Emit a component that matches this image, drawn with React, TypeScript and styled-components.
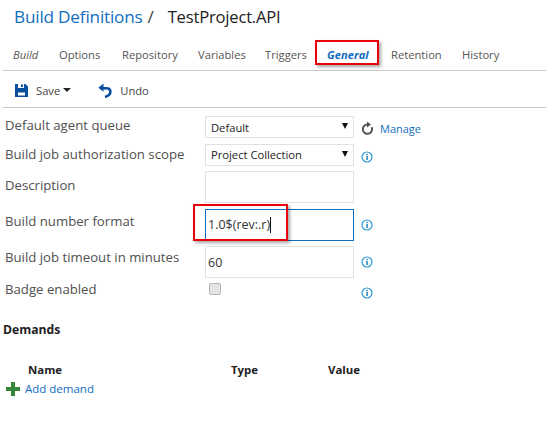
import React from "react";
import styled, { createGlobalStyle } from "styled-components";

const Global = createGlobalStyle`
  html, body { margin: 0; padding: 0; background: #fff; }
  body { font-family: "Open Sans", "Noto Sans", "Liberation Sans", sans-serif; color: #333; }
`;

const Page = styled.div`
  width: 546px;
  height: 431px;
  overflow: hidden;
  position: relative;
  background: #fff;
`;

const TitleBar = styled.div`
  height: 36px;
  padding: 0 0 3px 14px;
  display: flex;
  align-items: center;
  box-sizing: border-box;
  font-size: 17.2px;
  letter-spacing: -0.2px;
  white-space: pre;
`;
const Crumb = styled.span`color: #106ebe;`;
const Sep = styled.span`color: #444; margin: 0 14px 0 5px;`;
const Project = styled.span`color: #222; font-size: 16.6px;`;

const Tabs = styled.div`
  margin-left: 3px;
  height: 35px;
  display: flex;
  align-items: center;
  border-bottom: 1px solid #c8c8c8;
  padding: 3px 0 0 10px;
  box-sizing: border-box;
`;
const Tab = styled.div<{ $w: number; $active?: boolean; $italic?: boolean }>`
  position: relative;
  width: ${(p) => p.$w}px;
  flex: none;
  font-size: 11.2px;
  white-space: nowrap;
  color: ${(p) => (p.$active ? "#106ebe" : "#555")};
  font-style: ${(p) => (p.$italic || p.$active ? "italic" : "normal")};
  font-weight: ${(p) => (p.$active ? 700 : 400)};
`;
const TabMark = styled.div`
  position: absolute;
  left: -12px;
  top: -7px;
  width: 64px;
  height: 25px;
  box-sizing: border-box;
  border: 2px solid #e8000d;
  box-shadow: 2px 2px 3px rgba(0,0,0,0.35);
`;

const Toolbar = styled.div`
  margin-left: 3px;
  height: 37px;
  display: flex;
  align-items: center;
  border-bottom: 1px solid #c8c8c8;
  box-sizing: border-box;
  padding: 2px 0 0 12px;
  font-size: 11.2px;
  color: #444;
`;
const ToolIcon = styled.svg`flex: none; display: block;`;
const SaveLabel = styled.span`margin-left: 8px;`;
const Caret = styled.span`
  margin-left: 3px;
  width: 0;
  height: 0;
  border-left: 4px solid transparent;
  border-right: 4px solid transparent;
  border-top: 4px solid #222;
`;
const UndoBtn = styled.span`
  margin-left: 27px;
  display: flex;
  align-items: center;
  gap: 8px;
`;

const Form = styled.div`
  display: grid;
  grid-template-columns: 205px 149px 1fr;
  grid-template-rows: 22px 22px 32px 32px 32px 20px;
  padding-top: 8px;
  row-gap: 5.5px;
  font-size: 12px;
  color: #333;
`;
const Label = styled.div<{ $dy?: number }>`
  padding-left: 5px;
  font-size: 13.2px;
  color: #505050;
  line-height: 16px;
  transform: translateY(${(p) => p.$dy ?? 0}px);
  white-space: nowrap;
`;
const SelectBox = styled.div`
  position: relative;
  border: 1px solid #e2e2e2;
  box-sizing: border-box;
  display: flex;
  align-items: center;
  padding-left: 5px;
  font-size: 11.2px;
  color: #222;
`;
const SelectArrow = styled.span`
  position: absolute;
  right: 5px;
  top: 6px;
  width: 0;
  height: 0;
  border-left: 3.5px solid transparent;
  border-right: 3.5px solid transparent;
  border-top: 6px solid #111;
`;
const TextBox = styled.div<{ $focus?: boolean }>`
  position: relative;
  border: 1px solid ${(p) => (p.$focus ? "#106ebe" : "#e2e2e2")};
  box-sizing: border-box;
  display: flex;
  align-items: center;
  padding-left: 2px;
  font-size: 12.5px;
  color: #333;
`;
const Cursor = styled.span`
  display: inline-block;
  width: 1px;
  height: 16px;
  background: #111;
`;
const FieldMark = styled.div`
  position: absolute;
  left: -13px;
  top: -6px;
  width: 95px;
  height: 37px;
  box-sizing: border-box;
  border: 2px solid #e8000d;
  box-shadow: 2px 2px 3px rgba(0,0,0,0.35);
`;
const Check = styled.div`
  width: 12px;
  height: 12px;
  margin: -1px 0 0 4px;
  background: #e4e4e4;
  border: 1px solid #b4b4b4;
  border-radius: 2px;
  box-sizing: border-box;
`;
const Side = styled.div<{ $dy?: number }>`
  display: flex;
  align-items: center;
  padding-left: 7px;
  gap: 6px;
  transform: translateY(${(p) => p.$dy ?? 0}px);
`;
const ManageLink = styled.a`
  color: #106ebe;
  font-size: 11px;
`;

const Demands = styled.div`
  margin-top: 18px;
  padding-left: 3px;
  font-size: 12.2px;
  font-weight: 700;
  color: #222;
  line-height: 16px;
`;
const DemandHead = styled.div`
  display: grid;
  grid-template-columns: 203px 97px 1fr;
  margin-top: 24px;
  padding-left: 28px;
  font-size: 11.4px;
  font-weight: 700;
  color: #222;
  line-height: 16px;
`;
const AddRow = styled.div`
  display: flex;
  align-items: center;
  gap: 5px;
  padding-left: 6px;
  margin-top: 3px;
  color: #106ebe;
  font-size: 11.5px;
  line-height: 16px;
`;

const Info = () => (
  <ToolIcon width="12" height="12" viewBox="0 0 12 12">
    <circle cx="6" cy="6" r="5" fill="none" stroke="#2b9ad6" strokeWidth="1.2" />
    <rect x="5.3" y="5" width="1.5" height="4" fill="#1f86c4" />
    <rect x="5.3" y="2.8" width="1.5" height="1.4" fill="#1f86c4" />
  </ToolIcon>
);

export default function App() {
  return (
    <Page>
      <Global />
      <TitleBar>
        <Crumb>Build Definitions</Crumb>
        <Sep>/</Sep>
        <Project>TestProject.API</Project>
      </TitleBar>
      <Tabs>
        <Tab $w={46} $italic>Build</Tab>
        <Tab $w={63}>Options</Tab>
        <Tab $w={76}>Repository</Tab>
        <Tab $w={67}>Variables</Tab>
        <Tab $w={62}>Triggers</Tab>
        <Tab $w={64} $active>General<TabMark /></Tab>
        <Tab $w={71}>Retention</Tab>
        <Tab $w={50}>History</Tab>
      </Tabs>
      <Toolbar>
        <ToolIcon width="13" height="13" viewBox="0 0 13 13">
          <path d="M0 0H3V4H9V0H10.5L13 2.5V13H0Z" fill="#0a4f9e" />
          <rect x="6" y="0.5" width="2" height="2.5" fill="#0a4f9e" />
          <rect x="3" y="8.5" width="7" height="3" fill="#fff" />
        </ToolIcon>
        <SaveLabel>Save</SaveLabel>
        <Caret />
        <UndoBtn>
          <ToolIcon width="14" height="15" viewBox="0 0 14 15">
            <path d="M3.2 5.2H8.5C11 5.2 12.4 6.8 12.4 8.8C12.4 11.2 10.2 13 7 14" fill="none" stroke="#0a4f9e" strokeWidth="2.6" />
            <path d="M0.3 4.8L5.5 0.6V8.8Z" fill="#0a4f9e" />
          </ToolIcon>
          Undo
        </UndoBtn>
      </Toolbar>
      <Form>
        <Label $dy={1}>Default agent queue</Label>
        <SelectBox>Default<SelectArrow /></SelectBox>
        <Side $dy={1}>
          <ToolIcon width="13" height="14" viewBox="0 0 13 14">
            <path d="M10.6 6.2A4.6 4.6 0 1 1 6.5 3.6" fill="none" stroke="#555" strokeWidth="2" />
            <path d="M6 0.6L10 3.6L6 6.6Z" fill="#555" />
          </ToolIcon>
          <ManageLink>Manage</ManageLink>
        </Side>
        <Label $dy={2}>Build job authorization scope</Label>
        <SelectBox>Project Collection<SelectArrow /></SelectBox>
        <Side $dy={2}><Info /></Side>
        <Label $dy={6}>Description</Label>
        <TextBox />
        <div />
        <Label $dy={4}>Build number format</Label>
        <TextBox $focus>1.0$(rev:.r)<Cursor /><FieldMark /></TextBox>
        <Side><Info /></Side>
        <Label $dy={3}>Build job timeout in minutes</Label>
        <TextBox>60</TextBox>
        <Side><Info /></Side>
        <Label $dy={-3}>Badge enabled</Label>
        <div><Check /></div>
        <Side $dy={-1}><Info /></Side>
      </Form>
      <Demands>Demands</Demands>
      <DemandHead>
        <span>Name</span>
        <span>Type</span>
        <span>Value</span>
      </DemandHead>
      <AddRow>
        <ToolIcon width="14" height="14" viewBox="0 0 14 14">
          <path d="M5 0H9V5H14V9H9V14H5V9H0V5H5Z" fill="#37873a" />
        </ToolIcon>
        Add demand
      </AddRow>
    </Page>
  );
}
